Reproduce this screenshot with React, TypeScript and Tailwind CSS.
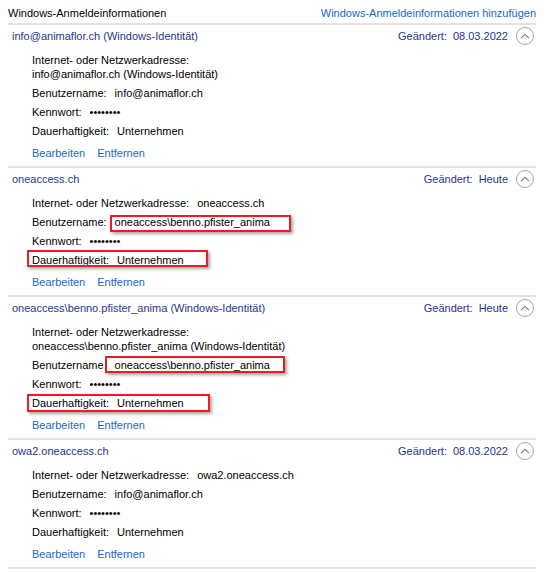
import React from "react";

type Detail = {
  label: string;
  value: string;
  wrap?: boolean;
  box?: { left: number; top: number; width: number; height: number };
};

type Credential = {
  title: string;
  changed: string;
  details: Detail[];
};

const credentials: Credential[] = [
  {
    title: "info@animaflor.ch (Windows-Identität)",
    changed: "08.03.2022",
    details: [
      { label: "Internet- oder Netzwerkadresse:", value: "info@animaflor.ch (Windows-Identität)", wrap: true },
      { label: "Benutzername:", value: "info@animaflor.ch" },
      { label: "Kennwort:", value: "••••••••" },
      { label: "Dauerhaftigkeit:", value: "Unternehmen" },
    ],
  },
  {
    title: "oneaccess.ch",
    changed: "Heute",
    details: [
      { label: "Internet- oder Netzwerkadresse:", value: "oneaccess.ch" },
      {
        label: "Benutzername:",
        value: "oneaccess\\benno.pfister_anima",
        box: { left: 78, top: 0, width: 181, height: 17 },
      },
      { label: "Kennwort:", value: "••••••••" },
      {
        label: "Dauerhaftigkeit:",
        value: "Unternehmen",
        box: { left: -5, top: -3, width: 181, height: 17 },
      },
    ],
  },
  {
    title: "oneaccess\\benno.pfister_anima (Windows-Identität)",
    changed: "Heute",
    details: [
      {
        label: "Internet- oder Netzwerkadresse:",
        value: "oneaccess\\benno.pfister_anima (Windows-Identität)",
        wrap: true,
      },
      {
        label: "Benutzername",
        value: "oneaccess\\benno.pfister_anima",
        box: { left: 73, top: -2, width: 180, height: 17 },
      },
      { label: "Kennwort:", value: "••••••••" },
      {
        label: "Dauerhaftigkeit:",
        value: "Unternehmen",
        box: { left: -5, top: -2, width: 183, height: 18 },
      },
    ],
  },
  {
    title: "owa2.oneaccess.ch",
    changed: "08.03.2022",
    details: [
      { label: "Internet- oder Netzwerkadresse:", value: "owa2.oneaccess.ch" },
      { label: "Benutzername:", value: "info@animaflor.ch" },
      { label: "Kennwort:", value: "••••••••" },
      { label: "Dauerhaftigkeit:", value: "Unternehmen" },
    ],
  },
];

function ChevronCircle() {
  return (
    <span className="flex h-[18px] w-[18px] shrink-0 items-center justify-center rounded-full border border-[#a6a6a6]">
      <svg width="10" height="6" viewBox="0 0 10 6" fill="none">
        <path d="M1 5.2 L5 1.2 L9 5.2" stroke="#7a7a7a" strokeWidth="1.1" />
      </svg>
    </span>
  );
}

function DetailRow({ d }: { d: Detail }) {
  return (
    <div className="relative">
      {d.wrap ? (
        <>
          <div>{d.label}</div>
          <div>{d.value}</div>
        </>
      ) : (
        <div className="flex">
          <span>{d.label}</span>
          <span className={d.label.endsWith(":") ? "ml-[8px]" : "ml-[11px]"}>{d.value}</span>
        </div>
      )}
      {d.box && (
        <span
          className="pointer-events-none absolute border-2 border-[#ec1c24] shadow-[2px_2px_3px_rgba(0,0,0,0.35)]"
          style={{ left: d.box.left, top: d.box.top, width: d.box.width, height: d.box.height }}
        />
      )}
    </div>
  );
}

export default function App() {
  return (
    <div
      className="h-[572px] w-[557px] overflow-hidden bg-white text-[11px] leading-[14px] text-black"
      style={{ fontFamily: '"Liberation Sans", Arial, sans-serif' }}
    >
      <div className="ml-[8px] w-[528px]">
        {/* Header */}
        <div className="flex items-center justify-between pt-[6px] pb-[3px]">
          <span>Windows-Anmeldeinformationen</span>
          <span className="text-[#1a66cc]">Windows-Anmeldeinformationen hinzufügen</span>
        </div>

        {credentials.map((c, i) => (
          <div key={i} className="border-t-2 border-[#e3e3e3] pt-[4px] pb-[6px]">
            <div className="flex h-[14px] items-center justify-between pl-[4px] pr-[2px] text-[#27358c]">
              <span>{c.title}</span>
              <div className="flex items-center gap-[8px]">
                <span>
                  Geändert:<span className="ml-[6px]">{c.changed}</span>
                </span>
                <ChevronCircle />
              </div>
            </div>

            <div className="mt-[10px] flex flex-col gap-[5px] pl-[24px]">
              {c.details.map((d, j) => (
                <DetailRow key={j} d={d} />
              ))}
            </div>

            <div className="mt-[8px] flex gap-[12px] pl-[24px] text-[#1a66cc]">
              <span>Bearbeiten</span>
              <span>Entfernen</span>
            </div>
          </div>
        ))}
        <div className="border-t-2 border-[#e3e3e3]" />
      </div>
    </div>
  );
}
